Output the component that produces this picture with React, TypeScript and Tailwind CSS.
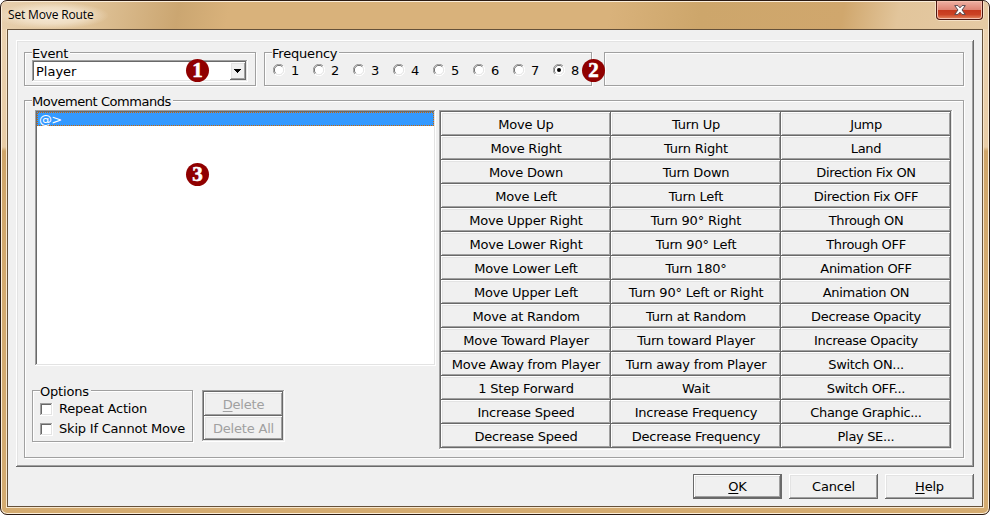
import React from "react";

const raised =
  "shadow-[inset_-1px_-1px_0_#696969,inset_1px_1px_0_#ffffff,inset_-2px_-2px_0_#a0a0a0,inset_2px_2px_0_#e3e3e3]";
const sunken =
  "shadow-[inset_-1px_-1px_0_#ffffff,inset_1px_1px_0_#a0a0a0,inset_-2px_-2px_0_#e3e3e3,inset_2px_2px_0_#696969]";
const etched =
  "border border-[#a0a0a0] shadow-[1px_1px_0_#ffffff,inset_1px_1px_0_#ffffff]";

const columnTracking = [
  "tracking-[-0.2px]",
  "tracking-[-0.2px]",
  "tracking-[-0.33px]",
];

const commands: string[] = [
  "Move Up", "Turn Up", "Jump",
  "Move Right", "Turn Right", "Land",
  "Move Down", "Turn Down", "Direction Fix ON",
  "Move Left", "Turn Left", "Direction Fix OFF",
  "Move Upper Right", "Turn 90° Right", "Through ON",
  "Move Lower Right", "Turn 90° Left", "Through OFF",
  "Move Lower Left", "Turn 180°", "Animation OFF",
  "Move Upper Left", "Turn 90° Left or Right", "Animation ON",
  "Move at Random", "Turn at Random", "Decrease Opacity",
  "Move Toward Player", "Turn toward Player", "Increase Opacity",
  "Move Away from Player", "Turn away from Player", "Switch ON...",
  "1 Step Forward", "Wait", "Switch OFF...",
  "Increase Speed", "Increase Frequency", "Change Graphic...",
  "Decrease Speed", "Decrease Frequency", "Play SE...",
];

function Legend({ children, className = "tracking-[-0.2px]" }: { children: string; className?: string }) {
  return (
    <span className={`absolute -top-[7px] left-[7px] h-4 bg-[#f0f0f0] pr-[2px] leading-4 ${className}`}>
      {children}
    </span>
  );
}

function Badge({ n, className }: { n: number; className: string }) {
  return (
    <span
      className={`absolute z-10 flex size-[23px] items-center justify-center rounded-full bg-[#900000] font-['Liberation_Serif',serif] text-[21px] leading-none font-bold text-white [-webkit-text-stroke:0.6px_white] ${className}`}
    >
      {n}
    </span>
  );
}

function Radio({ n, checked }: { n: number; checked?: boolean }) {
  return (
    <label className="flex h-4 w-10 shrink-0 items-center gap-[7px]">
      <svg width="12" height="12" viewBox="0 0 12 12">
        <circle cx="6" cy="6" r="5" fill="#fff" />
        <path d="M1.9 10.1A5.5 5.5 0 0 1 10.1 1.9" fill="none" stroke="#a0a0a0" />
        <path d="M2.7 9.3A4.5 4.5 0 0 1 9.3 2.7" fill="none" stroke="#696969" />
        <path d="M10.1 1.9A5.5 5.5 0 0 1 1.9 10.1" fill="none" stroke="#fff" />
        <path d="M9.3 2.7A4.5 4.5 0 0 1 2.7 9.3" fill="none" stroke="#e3e3e3" />
        {checked && <circle cx="6" cy="6" r="2" fill="#000" />}
      </svg>
      <span className="-ml-px pt-[2px]">{n}</span>
    </label>
  );
}

function Check({ label }: { label: string }) {
  return (
    <label className="flex h-5 items-center gap-[6px] tracking-[-0.2px]">
      <span className={`size-[13px] bg-white ${sunken}`} />
      <span>{label}</span>
    </label>
  );
}

export default function App() {
  return (
    <div className="relative h-[515px] w-[990px] bg-white font-['DejaVu_Sans',sans-serif] text-[13px] leading-4 whitespace-nowrap text-black">
      <div className="flex h-full flex-col overflow-hidden rounded-[7px] border border-[#2a1a12] bg-[linear-gradient(180deg,#ebd3b2_0,#e8ccA6_146px,#cfa569_150px,#d4ab70_300px,#d4ab70_100%)] px-[6px] pb-[7px] shadow-[inset_0_0_0_1px_#fbeedb]">
        <header className="relative -mx-[5px] mt-px flex h-[27px] justify-between bg-[linear-gradient(100deg,#e7cfad_0,#dfc297_90px,#cba671_175px,#d9b27b_225px,#d9b27b_600px,#cda66b_690px,#d0a76d_830px,#e2c59b_885px,#e5caa4_100%)]">
          <span className="-ml-[6px] flex h-[27px] bg-[radial-gradient(closest-side,#f8eedfee,#f6e9d5aa_60%,#f6e9d500)] pt-[4px] pr-[16px] pl-[12px] font-['Open_Sans',sans-serif] text-[12px] leading-[17px] tracking-[-0.15px]">
            Set Move Route
          </span>
          <span className="-mt-px mr-[5px] flex h-[19px] w-[47px] items-center justify-center rounded-b-[4px] border border-t-0 border-[#4b1712] bg-[linear-gradient(180deg,#eeb1a3_0,#df8574_48%,#c5381d_50%,#cb4225_75%,#e58a62_100%)] shadow-[0_0_0_1px_#f5e2c8,inset_0_0_0_1px_#f6bfae]">
            <svg width="12" height="10" viewBox="0 0 12 10">
              <path
                d="M.7 .6H4L6 2.8 8 .6h3.3L8 5l3.3 4.4H8L6 7.2 4 9.4H.7L4 5Z"
                fill="#fff"
                stroke="#55494f"
                strokeWidth="1"
                strokeLinejoin="round"
              />
            </svg>
          </span>
        </header>
        <main className="flex flex-1 flex-col border border-[#65513a] bg-[#f0f0f0] px-2 pt-[10px] shadow-[0_0_0_1px_#f7e6cc]">
          <section className={`flex h-[427px] w-[958px] flex-col gap-[14px] pt-3 pl-2 ${raised}`}>
            <div className="flex h-[34px]">
              <div className={`relative w-[232px] pt-[7px] pl-[7px] ${etched}`}>
                <Legend>Event</Legend>
                <div className={`relative flex h-[22px] w-[216px] items-center justify-between bg-white p-[2px] ${sunken}`}>
                  <span className="pt-[2px] pl-[2px]">Player</span>
                  <span className={`flex h-[18px] w-4 items-center justify-center bg-[#f0f0f0] ${raised}`}>
                    <svg width="8" height="4" viewBox="0 0 8 4" shapeRendering="crispEdges">
                      <path d="M0 0h7v1H6v1H5v1H4v1H3V3H2V2H1V1H0Z" />
                    </svg>
                  </span>
                </div>
                <Badge n={1} className="top-[6px] left-[161px]" />
              </div>
              <div className={`relative ml-2 w-[328px] pt-[9px] pl-2 ${etched}`}>
                <Legend>Frequency</Legend>
                <div className="flex">
                  {[1, 2, 3, 4, 5, 6, 7, 8].map((n) => (
                    <Radio key={n} n={n} checked={n === 8} />
                  ))}
                </div>
                <Badge n={2} className="top-[6px] left-[317px]" />
              </div>
              <div className={`ml-3 w-[360px] ${etched}`} />
            </div>
            <div className={`relative flex h-[358px] w-[940px] gap-[3px] pt-[9px] pl-[7px] ${etched}`}>
              <Legend className="tracking-[-0.45px]">Movement Commands</Legend>
              <div className="flex w-[404px] flex-col">
                <div className={`relative ml-[3px] h-[256px] w-[401px] bg-white p-[2px] ${sunken}`}>
                  <div className="h-[14px] bg-[repeating-conic-gradient(#cc6600_0_25%,#3399ff_0_50%)] bg-[length:2px_2px] p-px">
                    <div className="h-3 bg-[#3399ff] pl-px leading-[14px] tracking-[-0.8px] text-white">@&gt;</div>
                  </div>
                  <Badge n={3} className="top-[53px] left-[151px]" />
                </div>
                <div className="mt-6 flex gap-[9px]">
                  <div className={`relative h-[52px] w-[161px] pt-2 pl-[7px] ${etched}`}>
                    <Legend>Options</Legend>
                    <Check label="Repeat Action" />
                    <Check label="Skip If Cannot Move" />
                  </div>
                  <div className={`h-[52px] w-[83px] p-[2px] tracking-[-0.2px] text-[#a0a0a0] ${sunken}`}>
                    <div className={`flex h-6 items-center justify-center pt-px ${raised}`}>
                      <span><u className="underline-offset-2">D</u>elete</span>
                    </div>
                    <div className={`flex h-6 items-center justify-center pt-px ${raised}`}>Delete All</div>
                  </div>
                </div>
              </div>
              <div className={`grid h-[340px] w-[514px] grid-cols-3 p-[2px] ${sunken}`}>
                {commands.map((c, i) => (
                  <button key={c} className={`h-6 pt-px text-center leading-none ${raised} ${columnTracking[i % 3]}`}>
                    {c}
                  </button>
                ))}
              </div>
            </div>
          </section>
          <footer className="mt-[7px] flex w-[958px] justify-end gap-[7px] tracking-[-0.2px]">
            <div className="h-[25px] w-[89px] border border-[#696969]">
              <button className={`size-full ${raised}`}>
                <u className="underline-offset-2">O</u>K
              </button>
            </div>
            <button className={`h-[25px] w-[89px] ${raised}`}>Cancel</button>
            <button className={`h-[25px] w-[89px] ${raised}`}>
              <u className="underline-offset-2">H</u>elp
            </button>
          </footer>
        </main>
      </div>
    </div>
  );
}
